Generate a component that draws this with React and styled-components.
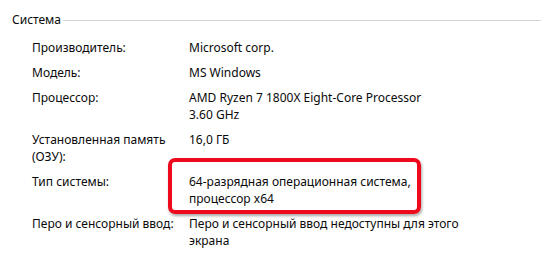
import React from "react";
import styled, { createGlobalStyle } from "styled-components";

const GlobalStyle = createGlobalStyle`
  body {
    margin: 0;
    background: #ffffff;
    font-family: "Segoe UI", "Noto Sans", "Open Sans", sans-serif;
    color: #0a0a0a;
  }
`;

const Panel = styled.div`
  width: 550px;
  height: 260px;
  box-sizing: border-box;
  padding: 11px 9px 0 12px;
  font-size: 12px;
  line-height: 17px;
`;

const Header = styled.div`
  display: flex;
  align-items: center;
  gap: 2px;
  height: 17px;
`;

const HeaderLine = styled.div`
  flex: 1;
  height: 1px;
  background: #d6d6d6;
  margin-top: 1px;
`;

const Grid = styled.div`
  display: grid;
  grid-template-columns: 157px 1fr;
  row-gap: 8px;
  margin-top: 11px;
  padding-left: 20px;
`;

const Label = styled.div``;

const Value = styled.div`
  position: relative;

  ${(p) =>
    p.$highlight &&
    `
    &::after {
      content: "";
      position: absolute;
      left: -21px;
      top: -15px;
      width: 253px;
      height: 56px;
      box-sizing: border-box;
      border: 4px solid #ee0a1c;
      border-radius: 7px;
      box-shadow: 1px 2px 3px rgba(0, 0, 0, 0.35);
    }
  `}
`;

const rows = [
  ["Производитель:", "Microsoft corp."],
  ["Модель:", "MS Windows"],
  ["Процессор:", "AMD Ryzen 7 1800X Eight-Core Processor\n3.60 GHz"],
  ["Установленная память\n(ОЗУ):", "16,0 ГБ"],
  ["Тип системы:", "64-разрядная операционная система,\nпроцессор x64", true],
  ["Перо и сенсорный ввод:", "Перо и сенсорный ввод недоступны для этого\nэкрана"],
];

const Lines = ({ text }) =>
  text.split("\n").map((line, i) => <div key={i}>{line}</div>);

export default function App() {
  return (
    <>
      <GlobalStyle />
      <Panel>
        <Header>
          <span>Система</span>
          <HeaderLine />
        </Header>
        <Grid>
          {rows.map(([label, value, highlight]) => (
            <React.Fragment key={label}>
              <Label>
                <Lines text={label} />
              </Label>
              <Value $highlight={highlight}>
                <Lines text={value} />
              </Value>
            </React.Fragment>
          ))}
        </Grid>
      </Panel>
    </>
  );
}
